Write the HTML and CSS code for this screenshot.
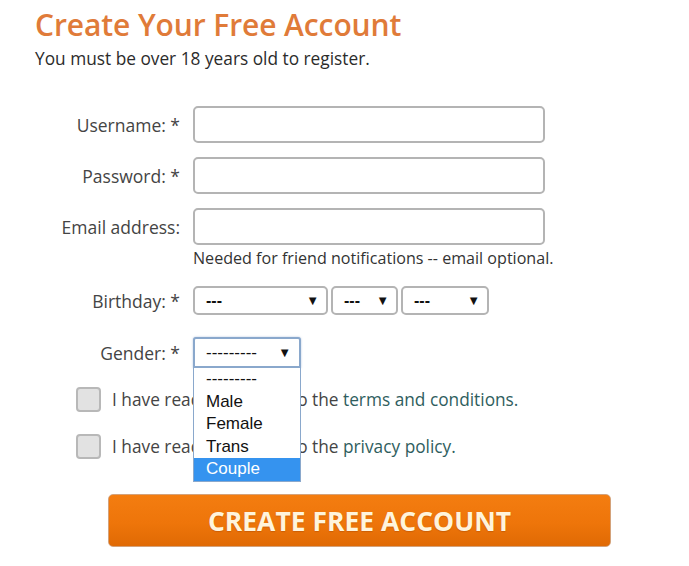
FILE: index.html
```html
<!DOCTYPE html>
<html lang="en">
<head>
<meta charset="utf-8">
<title>Create Your Free Account</title>
<link rel="stylesheet" href="styles.css">
</head>
<body>
<div class="page">
  <h1 class="title">Create Your Free Account</h1>
  <p class="subtitle">You must be over 18 years old to register.</p>

  <form class="form">
    <div class="row row-first">
      <label class="label">Username: *</label>
      <div class="text-input"></div>
    </div>
    <div class="row row-text">
      <label class="label">Password: *</label>
      <div class="text-input"></div>
    </div>
    <div class="row row-text">
      <label class="label">Email address:</label>
      <div class="text-input"></div>
    </div>
    <div class="row row-help">
      <span></span>
      <div class="help">Needed for friend notifications -- email optional.</div>
    </div>
    <div class="row row-birthday">
      <label class="label">Birthday: *</label>
      <div class="selects">
        <div class="select select-month"><span>---</span><span class="arrow">&#9660;</span></div>
        <div class="select select-day"><span>---</span><span class="arrow">&#9660;</span></div>
        <div class="select select-year"><span>---</span><span class="arrow">&#9660;</span></div>
      </div>
    </div>
    <div class="row row-gender">
      <label class="label">Gender: *</label>
      <div class="gender-wrap">
        <div class="select select-gender"><span>---------</span><span class="arrow">&#9660;</span></div>
        <ul class="options">
          <li class="option">---------</li>
          <li class="option">Male</li>
          <li class="option">Female</li>
          <li class="option">Trans</li>
          <li class="option option-active">Couple</li>
        </ul>
      </div>
    </div>
    <div class="check-row check-first">
      <span class="checkbox"></span>
      <span class="check-text">I have read and agree to the <a class="link" href="#">terms and conditions.</a></span>
    </div>
    <div class="check-row check-second">
      <span class="checkbox"></span>
      <span class="check-text">I have read and agree to the <a class="link" href="#">privacy policy.</a></span>
    </div>
    <div class="button-row">
      <button type="button" class="submit">CREATE FREE ACCOUNT</button>
    </div>
  </form>
</div>
</body>
</html>
```

FILE: styles.css
```css
* { box-sizing: border-box; }

html, body {
  margin: 0;
  padding: 0;
  background: #ffffff;
}

body {
  font-family: "Open Sans", "Noto Sans", "Liberation Sans", sans-serif;
  color: #333333;
}

.page {
  padding: 7px 0 0 35px;
}

.title {
  margin: 0;
  font-size: 30px;
  line-height: 36px;
  font-weight: 600;
  color: #e07b39;
  letter-spacing: -0.1px;
}

.subtitle {
  margin: 5px 0 0 0;
  font-size: 17.3px;
  line-height: 22px;
  color: #2b2b2b;
}

.form {
  display: flex;
  flex-direction: column;
}

.row {
  display: grid;
  grid-template-columns: 145px auto;
  column-gap: 13px;
  align-items: center;
}

.row-first { margin-top: 36px; }
.row-text { margin-top: 14px; }
.row-help { margin-top: 3px; }
.row-birthday { margin-top: 18px; }
.row-gender { margin-top: 22px; }

.label {
  text-align: right;
  font-size: 17.5px;
  color: #444444;
  white-space: nowrap;
}

.text-input {
  width: 352px;
  height: 37px;
  border: 2px solid #b4b4b4;
  border-radius: 5px;
  background: #ffffff;
}

.help {
  font-size: 16.1px;
  line-height: 20px;
  color: #333333;
  white-space: nowrap;
}

.selects {
  display: flex;
  gap: 3px;
}

.select {
  height: 29px;
  border: 2px solid #b4b4b4;
  border-radius: 5px;
  background: #ffffff;
  display: flex;
  align-items: center;
  justify-content: space-between;
  padding: 0 7px 0 11px;
  font-family: "Liberation Sans", Arial, sans-serif;
  font-size: 16px;
  font-weight: bold;
  color: #111111;
}

.arrow {
  font-size: 13px;
  font-weight: normal;
  color: #111111;
}

.select-month { width: 135px; }
.select-day { width: 67px; }
.select-year { width: 88px; }

.gender-wrap {
  position: relative;
  width: 108px;
}

.select-gender {
  width: 108px;
  height: 31px;
  border: 2px solid #8aa8cc;
  border-radius: 3px 3px 0 0;
  box-shadow: 0 0 2px rgba(90, 130, 190, 0.5);
  font-weight: normal;
  font-size: 17px;
  padding: 0 8px 0 11px;
}

.options {
  position: absolute;
  left: 0;
  top: 100%;
  width: 108px;
  margin: 0;
  padding: 0;
  list-style: none;
  background: #ffffff;
  border: 1px solid #8aa8cc;
  border-top: none;
  z-index: 5;
  font-family: "Liberation Sans", Arial, sans-serif;
  font-size: 17px;
  color: #111111;
}

.option {
  height: 22.5px;
  line-height: 21.5px;
  padding-left: 12px;
}

.option-active {
  background: #3593ef;
  color: #ffffff;
}

.check-row {
  display: flex;
  align-items: center;
  padding-left: 41px;
  gap: 11px;
}

.check-first { margin-top: 19px; }
.check-second { margin-top: 22px; }

.checkbox {
  width: 25px;
  height: 25px;
  border: 2px solid #b8b8b8;
  border-radius: 4px;
  background: #e2e2e2;
  flex: none;
}

.check-text {
  font-size: 17.3px;
  color: #444444;
  white-space: nowrap;
}

.link {
  color: #2f5e5e;
  text-decoration: none;
}

.button-row {
  margin-top: 35px;
  padding-left: 73px;
}

.submit {
  width: 503px;
  height: 53px;
  border: 1px solid #d4a27a;
  border-radius: 5px;
  background: linear-gradient(to bottom, #f47d10 0%, #ee750a 55%, #e06a04 100%);
  color: #fff4dc;
  font-family: "Open Sans", "Noto Sans", "Liberation Sans", sans-serif;
  font-size: 26.5px;
  font-weight: 700;
  letter-spacing: 0;
  text-shadow: 0 1px 1px rgba(150, 60, 0, 0.35);
  cursor: pointer;
}
```
